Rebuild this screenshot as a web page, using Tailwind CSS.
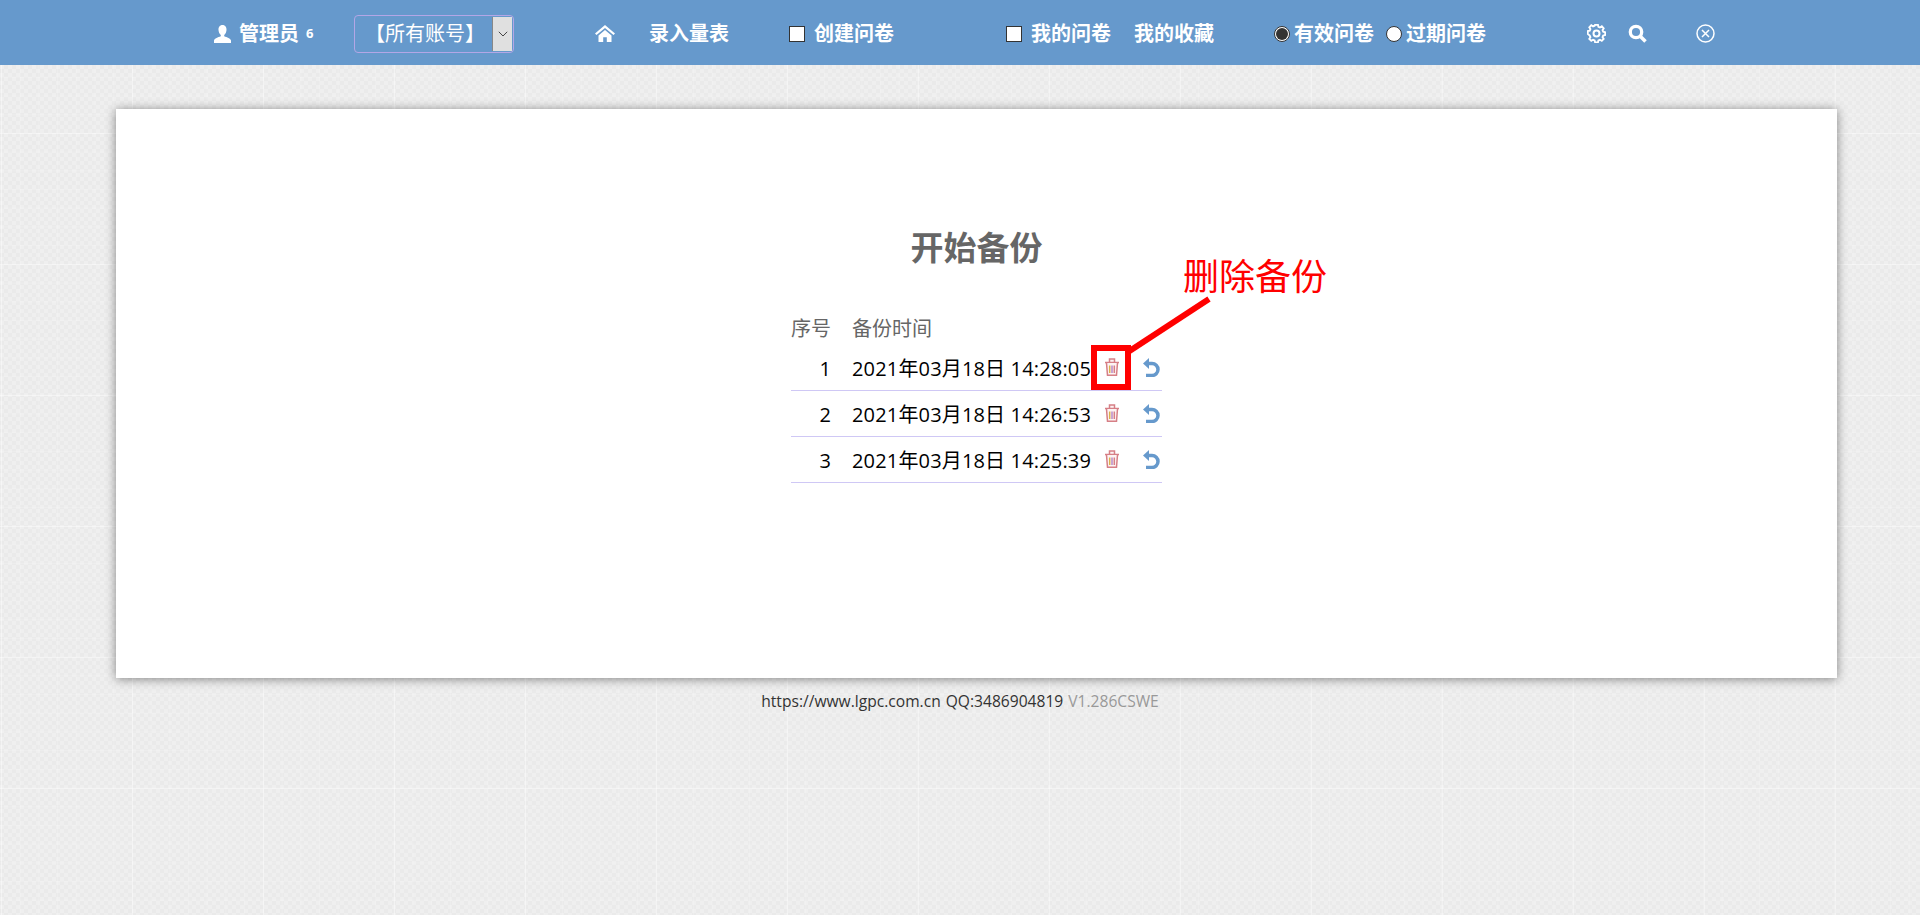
<!DOCTYPE html>
<html lang="zh-CN">
<head>
<meta charset="utf-8">
<title>开始备份</title>
<script src="https://cdn.jsdelivr.net/npm/@tailwindcss/browser@4"></script>
</head>
<body class="m-0 h-[915px] overflow-hidden bg-[#ececec] bg-[linear-gradient(rgba(255,255,255,0.35)_1px,transparent_1px),linear-gradient(90deg,rgba(255,255,255,0.35)_1px,transparent_1px),linear-gradient(rgba(255,255,255,0.14)_1px,transparent_1px),linear-gradient(90deg,rgba(255,255,255,0.14)_1px,transparent_1px),repeating-conic-gradient(#eaeaea_0_25%,#efefef_0_50%)] bg-[size:131px_131px,131px_131px,18.714px_18.714px,18.714px_18.714px,8px_8px] bg-[position:1px_2px,1px_2px,1px_2px,1px_2px,0_1px] font-['Open_Sans','Noto_Sans_CJK_SC',sans-serif]">
<header class="flex h-[65px] items-center bg-[#6699cc] pt-[2px] text-[20px] leading-none font-bold text-white">
  <svg class="ml-[214px] h-[18px] w-[17px]" viewBox="0 0 17 18" fill="#fff"><path d="M8.500 0C5.800 0 4.300 2.200 4.500 5c.2 2.200 1 4 2.300 5v1.300C4 12.300.5 13.400 0 15.500V18h17v-2.500c-.5-2.100-4-3.200-6.800-4.200V10c1.300-1 2.100-2.800 2.300-5 .2-2.800-1.300-5-4-5z"/></svg>
  <span class="ml-[8px] w-[60px] whitespace-nowrap">管理员</span>
  <span class="ml-[7px] w-[48px] text-[13px]">6</span>
  <div class="flex h-[38px] w-[160px] rounded-[4px] border border-[#b3a6e6] font-normal">
    <span class="flex-1 pl-[10px] text-[20px] leading-[36px] whitespace-nowrap">【所有账号】</span>
    <span class="my-[1px] mr-[1px] flex w-[20px] items-center justify-center border-l border-[#888] bg-[#e0e0e0]"><svg class="h-[6px] w-[10px]" viewBox="0 0 10 6" fill="none" stroke="#333" stroke-width="0.900"><path d="M.8.800 5 5 9.200.800"/></svg></span>
  </div>
  <svg class="ml-[81px] h-[17px] w-[20px]" viewBox="0 0 20 17" fill="#fff"><path d="M10 0 0 8.500l1.500 1.500L10 3l8.500 7L20 8.500zM3.500 10.500V17h4.700v-4.800h3.600V17h4.700v-6.500L10 5z"/></svg>
  <span class="ml-[34px] whitespace-nowrap">录入量表</span>
  <span class="ml-[60px] h-[16px] w-[16px] border border-[#333] bg-white"></span>
  <span class="ml-[9px] whitespace-nowrap">创建问卷</span>
  <span class="ml-[112px] h-[16px] w-[16px] border border-[#333] bg-white"></span>
  <span class="ml-[9px] whitespace-nowrap">我的问卷</span>
  <span class="ml-[23px] whitespace-nowrap">我的收藏</span>
  <span class="ml-[60px] flex h-[16px] w-[16px] items-center justify-center rounded-full border border-[#333] bg-white"><span class="h-[12px] w-[12px] rounded-full bg-[#333]"></span></span>
  <span class="ml-[4px] whitespace-nowrap">有效问卷</span>
  <span class="ml-[12px] h-[16px] w-[16px] rounded-full border border-[#333] bg-white"></span>
  <span class="ml-[4px] whitespace-nowrap">过期问卷</span>
  <svg class="ml-[101px] h-[19px] w-[19px]" viewBox="0 0 19 19" fill="none" stroke="#fff" stroke-width="2"><path d="M8 1.200h3l.5 2.200 1.600.7 2-1.200 2 2.200-1.200 1.900.7 1.700 2.100.5v3l-2.100.5-.7 1.700 1.200 1.900-2 2-2-1.100-1.600.7-.5 2.100H8l-.5-2.100-1.700-.7-1.900 1.100-2.100-2 1.200-1.900-.7-1.700L.2 11V8l2.100-.5.7-1.700-1.200-1.900 2.100-2.200 1.900 1.200 1.700-.7z" transform="translate(.6 -.4) scale(.94)"/><circle cx="9.500" cy="9.500" r="3"/></svg>
  <svg class="ml-[22px] h-[19px] w-[19px]" viewBox="0 0 19 19" fill="none" stroke="#fff"><circle cx="8" cy="8" r="5.700" stroke-width="3.300"/><path d="m12.500 12.500 5 5" stroke-width="3.600"/></svg>
  <svg class="ml-[49px] h-[19px] w-[19px]" viewBox="0 0 19 19" fill="none" stroke="#fff" stroke-width="1.500"><circle cx="9.500" cy="9.500" r="8.500"/><path d="m6 6 7 7m0-7-7 7"/></svg>
</header>

<main class="relative mt-[44px] ml-[116px] h-[569px] w-[1721px] bg-white shadow-[0_1px_10px_rgba(0,0,0,0.45)]">
  <h1 class="pt-[116px] text-center text-[33px] leading-[46px] font-bold text-[#666]">开始备份</h1>
  <div class="mt-[41px] ml-[675px] w-[371px] text-[20px]">
    <div class="flex h-[33px] items-center text-[#666]">
      <span class="w-[40px]">序号</span><span class="ml-[21px]">备份时间</span>
    </div>
    <div class="flex h-[46px] items-center border-b border-[#cfc8f5] pt-[2px] text-black">
      <span class="w-[40px] text-right">1</span><span class="ml-[21px] w-[239px] tracking-[0.16px] whitespace-nowrap">2021年03月18日 14:28:05</span>
      <svg class="mb-[3px] ml-[14px] h-[18px] w-[14px]" viewBox="0 0 14 18" fill="#fdf3f3" stroke="#d67f86" stroke-width="1.500"><path d="M0 4.500h14M4.500 4V1h5v3"/><path d="M1.500 5l1 12.300h9l1-12.300"/><path d="M4.700 7.500v7.500" stroke="#d9b44a"/><path d="M7 7.500v7.500" stroke="#b98ac8"/><path d="M9.300 7.500v7.500" stroke="#d67f86"/></svg>
      <svg class="mb-[3px] ml-[24px] h-[19px] w-[17px]" viewBox="0 0 17 19" fill="none" stroke="#6699cc" stroke-width="3.500"><path d="M5 5.500h4a6 6 0 0 1 0 12H3"/><path d="M6 0 0 5.500 6 11z" fill="#6699cc" stroke="none"/></svg>
    </div>
    <div class="flex h-[46px] items-center border-b border-[#cfc8f5] pt-[2px] text-black">
      <span class="w-[40px] text-right">2</span><span class="ml-[21px] w-[239px] tracking-[0.16px] whitespace-nowrap">2021年03月18日 14:26:53</span>
      <svg class="mb-[3px] ml-[14px] h-[18px] w-[14px]" viewBox="0 0 14 18" fill="#fdf3f3" stroke="#d67f86" stroke-width="1.500"><path d="M0 4.500h14M4.500 4V1h5v3"/><path d="M1.500 5l1 12.300h9l1-12.300"/><path d="M4.700 7.500v7.500" stroke="#d9b44a"/><path d="M7 7.500v7.500" stroke="#b98ac8"/><path d="M9.300 7.500v7.500" stroke="#d67f86"/></svg>
      <svg class="mb-[3px] ml-[24px] h-[19px] w-[17px]" viewBox="0 0 17 19" fill="none" stroke="#6699cc" stroke-width="3.500"><path d="M5 5.500h4a6 6 0 0 1 0 12H3"/><path d="M6 0 0 5.500 6 11z" fill="#6699cc" stroke="none"/></svg>
    </div>
    <div class="flex h-[46px] items-center border-b border-[#cfc8f5] pt-[2px] text-black">
      <span class="w-[40px] text-right">3</span><span class="ml-[21px] w-[239px] tracking-[0.16px] whitespace-nowrap">2021年03月18日 14:25:39</span>
      <svg class="mb-[3px] ml-[14px] h-[18px] w-[14px]" viewBox="0 0 14 18" fill="#fdf3f3" stroke="#d67f86" stroke-width="1.500"><path d="M0 4.500h14M4.500 4V1h5v3"/><path d="M1.500 5l1 12.300h9l1-12.300"/><path d="M4.700 7.500v7.500" stroke="#d9b44a"/><path d="M7 7.500v7.500" stroke="#b98ac8"/><path d="M9.300 7.500v7.500" stroke="#d67f86"/></svg>
      <svg class="mb-[3px] ml-[24px] h-[19px] w-[17px]" viewBox="0 0 17 19" fill="none" stroke="#6699cc" stroke-width="3.500"><path d="M5 5.500h4a6 6 0 0 1 0 12H3"/><path d="M6 0 0 5.500 6 11z" fill="#6699cc" stroke="none"/></svg>
    </div>
  </div>

  <!-- annotation laid over the table -->
  <div class="absolute top-[236px] left-[975px] h-[45px] w-[40px] border-[6px] border-[#ff0000]"></div>
  <svg class="absolute top-[185px] left-[1010px] h-[60px] w-[90px]" viewBox="0 0 90 60"><path d="M2 58 83 5" stroke="#ff0000" stroke-width="6"/></svg>
  <span class="absolute top-[146px] left-[1067px] text-[36px] leading-[44px] whitespace-nowrap text-[#ff0000]">删除备份</span>
</main>

<footer class="mt-[12px] flex justify-center text-[15.6px] leading-[22px] text-[#333]">
  <span>https://www.lgpc.com.cn</span><span class="ml-[5px]">QQ:3486904819</span><span class="ml-[5px] text-[#999]">V1.286CSWE</span>
</footer>
</body>
</html>
